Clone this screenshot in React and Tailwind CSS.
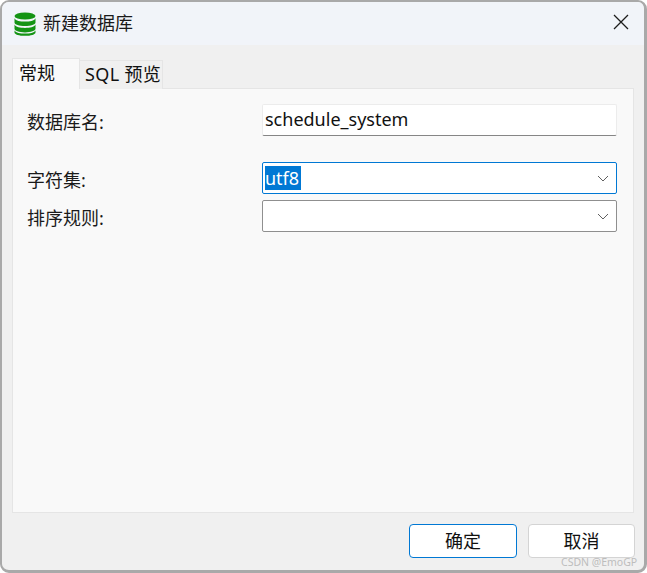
const fontStack = "font-['Noto_Sans','Noto_Sans_CJK_SC',sans-serif]";

const DbIcon = () => (
  <svg width="22" height="24" viewBox="0 0 22 24" className="shrink-0">
    <ellipse cx="11" cy="4" rx="10.5" ry="3.6" fill="#149414" />
    <path d="M0.5 6.2C2 8.8 6 9.6 11 9.6s9-.8 10.5-3.4v4.2c0 2-4.7 3.6-10.5 3.6S.5 12.4.5 10.4z" fill="#149414" />
    <path d="M0.5 12.6C2 15.2 6 16 11 16s9-.8 10.5-3.4v4.2c0 2-4.7 3.6-10.5 3.6S.5 18.8.5 16.8z" fill="#149414" />
    <path d="M0.5 18.4C2 20.6 6 21.6 11 21.6s9-1 10.5-3.2v2c0 2-4.7 3.4-10.5 3.4S.5 22.4.5 20.4z" fill="#149414" />
  </svg>
);

const Chevron = () => (
  <svg width="12" height="7" viewBox="0 0 12 7" className="shrink-0">
    <path d="M1 1l5 5 5-5" fill="none" stroke="#606060" strokeWidth="1" />
  </svg>
);

const Row = ({ label, className, children }) => (
  <div className={`flex items-center ${className}`}>
    <span className="w-[235px] pt-[4px] text-[18px] text-[#1a1a1a]">{label}</span>
    {children}
  </div>
);

const App = () => {
  return (
    <div className={`relative w-[647px] h-[573px] bg-white overflow-hidden ${fontStack}`}>
      <div className="w-full h-full flex flex-col bg-[#f0f0f0] rounded-[9px] border-t-2 border-l-2 border-r-[3px] border-b-[3px] border-[#a9a9a9] overflow-hidden">
        <div className="h-[43px] shrink-0 bg-[#f1f4f9] flex items-center pl-[12px] pr-[15px]">
          <DbIcon />
          <span className="ml-[7px] text-[18px] text-[#1a1a1a]">新建数据库</span>
          <svg width="16" height="16" viewBox="0 0 16 16" className="ml-auto mb-[3px]">
            <path d="M1 1l14 14M15 1L1 15" stroke="#1c1c1c" strokeWidth="1.3" fill="none" />
          </svg>
        </div>

        <div className="flex-1 flex flex-col pl-[10px] pr-[10px] pt-[13px]">
          <div className="flex items-end h-[31px] relative z-10">
            <div className="w-[68px] h-[31px] bg-[#f9f9f9] border border-b-0 border-[#e5e5e5] text-[18px] text-[#111] pl-[6px] leading-[28px]">常规</div>
            <div className="w-[83px] h-[29px] bg-[#f0f0f0] border border-l-0 border-b-0 border-[#e5e5e5] text-[18px] tracking-[0.35px] text-[#111] pl-[5px] leading-[27px] whitespace-nowrap">SQL 预览</div>
          </div>
          <div className="h-[425px] -mt-px bg-[#f9f9f9] border border-[#e5e5e5] pl-[14px] pr-[16px] pt-[15px]">
            <Row label="数据库名:" className="h-[32px]">
              <div className="w-[355px] h-[32px] bg-white border border-[#ececec] border-b-[#868686] rounded-[2px] pl-[2px] text-[18px] leading-[28px] text-[#111]">schedule_system</div>
            </Row>
            <Row label="字符集:" className="h-[32px] mt-[26px]">
              <div className="w-[355px] h-[32px] bg-white border border-[#0078d4] rounded-[2px] pl-[2px] pr-[7px] flex items-center justify-between">
                <span className="bg-[#0078d4] text-white text-[18px] leading-[24px] pr-[2px]">utf8</span>
                <Chevron />
              </div>
            </Row>
            <Row label="排序规则:" className="h-[32px] mt-[6px]">
              <div className="w-[355px] h-[32px] bg-white border border-[#8f8f8f] rounded-[2px] pr-[7px] flex items-center justify-end">
                <Chevron />
              </div>
            </Row>
          </div>
          <div className="flex justify-end gap-[11px] mt-[11px] mr-[-1px]">
            <button className="w-[108px] h-[34px] bg-white border border-[#0078d4] rounded-[4px] text-[18px] text-[#111]">确定</button>
            <button className="w-[107px] h-[34px] bg-white border border-[#d4d4d4] rounded-[4px] text-[18px] text-[#111]">取消</button>
          </div>
        </div>
      </div>
      <span className="absolute left-[561px] top-[555px] text-[10.5px] leading-[14px] text-[#bdbdbd]">CSDN @EmoGP</span>
    </div>
  );
};

export default App;
